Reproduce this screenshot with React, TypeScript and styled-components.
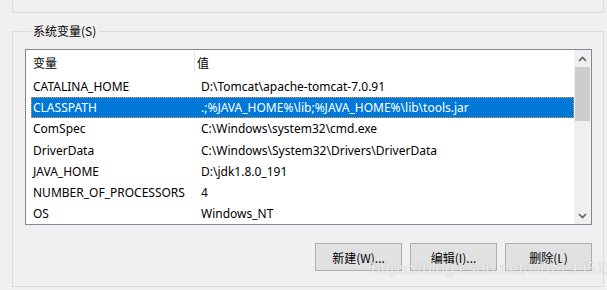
import styled, { createGlobalStyle } from 'styled-components'

const GlobalStyle = createGlobalStyle`
  html, body {
    margin: 0;
    padding: 0;
    background: #f0f0f0;
    font-family: "Noto Sans", "Noto Sans CJK SC", sans-serif;
    font-size: 12px;
    color: #000;
  }
`

const Page = styled.div`
  position: relative;
  width: 607px;
  height: 290px;
  padding-left: 12px;
  box-sizing: border-box;
  overflow: hidden;
`

const UpperBox = styled.div`
  width: 592px;
  height: 13px;
  box-sizing: border-box;
  border: 1px solid #dcdcdc;
  border-top: none;
`

const Group = styled.fieldset`
  width: 592px;
  box-sizing: border-box;
  margin: 10px 0 0;
  padding: 10px 12px 15px 12px;
  border: 1px solid #dcdcdc;
  min-width: 0;
`

const Legend = styled.legend`
  margin-left: 6px;
  padding: 0 2px;
  font-family: "Noto Sans CJK SC", sans-serif;
  font-size: 12px;
  line-height: 16px;
`

const ListBox = styled.div`
  display: flex;
  width: 567px;
  height: 176px;
  box-sizing: border-box;
  border: 1px solid #828790;
  background: #fff;
`

const ListBody = styled.div`
  flex: 1;
  display: flex;
  flex-direction: column;
  padding-left: 5px;
`

const Header = styled.div`
  display: flex;
  height: 26px;
  align-items: flex-start;
  padding-top: 1px;
  box-sizing: border-box;
`

const HeaderCell = styled.div<{ $w?: number; $sep?: boolean }>`
  width: ${p => (p.$w ? `${p.$w}px` : 'auto')};
  flex: ${p => (p.$w ? 'none' : '1')};
  height: 22px;
  box-sizing: border-box;
  padding-left: 2px;
  display: flex;
  align-items: center;
  font-family: "Noto Sans CJK SC", sans-serif;
  border-right: ${p => (p.$sep ? '1px solid #e5e5e5' : 'none')};
`

const Row = styled.div<{ $sel?: boolean }>`
  display: flex;
  height: 21.2px;
  align-items: center;
  box-sizing: border-box;
  background: ${p => (p.$sel ? '#0078d7' : 'transparent')};
  color: ${p => (p.$sel ? '#fff' : '#000')};
  border: 1px ${p => (p.$sel ? 'dotted #f59a3c' : 'solid transparent')};
`

const Cell = styled.div<{ $w?: number }>`
  width: ${p => (p.$w ? `${p.$w}px` : 'auto')};
  flex: ${p => (p.$w ? 'none' : '1')};
  padding-left: 1px;
  white-space: nowrap;
  overflow: hidden;
`

const ScrollBar = styled.div`
  width: 17px;
  display: flex;
  flex-direction: column;
  align-items: center;
  background: #f0f0f0;
`

const Arrow = styled.div`
  height: 17px;
  width: 17px;
  display: flex;
  align-items: center;
  justify-content: center;
`

const Thumb = styled.div`
  width: 15px;
  height: 54px;
  background: #cdcdcd;
`

const Track = styled.div`
  flex: 1;
`

const Buttons = styled.div`
  display: flex;
  justify-content: flex-end;
  gap: 8px;
  margin-top: 18px;
  width: 567px;
`

const Button = styled.button`
  width: 87px;
  height: 28px;
  background: #e1e1e1;
  border: 1px solid #adadad;
  font-family: "Noto Sans CJK SC", sans-serif;
  font-size: 12px;
  color: #000;
  padding: 0;
`

const Watermark = styled.div`
  position: absolute;
  left: 371px;
  top: 259px;
  font-family: "Liberation Sans", sans-serif;
  font-size: 17px;
  white-space: nowrap;
  color: rgba(255, 255, 255, 0.75);
  text-shadow: 0 0 1px rgba(120, 120, 120, 0.5);
  pointer-events: none;
`

const vars: [string, string][] = [
  ['CATALINA_HOME', 'D:\\Tomcat\\apache-tomcat-7.0.91'],
  ['CLASSPATH', '.;%JAVA_HOME%\\lib;%JAVA_HOME%\\lib\\tools.jar'],
  ['ComSpec', 'C:\\Windows\\system32\\cmd.exe'],
  ['DriverData', 'C:\\Windows\\System32\\Drivers\\DriverData'],
  ['JAVA_HOME', 'D:\\jdk1.8.0_191'],
  ['NUMBER_OF_PROCESSORS', '4'],
  ['OS', 'Windows_NT'],
]

const Chevron = ({ up }: { up?: boolean }) => (
  <svg width="9" height="6" viewBox="0 0 9 6">
    <path
      d={up ? 'M1 5 L4.5 1.5 L8 5' : 'M1 1 L4.5 4.5 L8 1'}
      fill="none"
      stroke="#606060"
      strokeWidth="1.6"
    />
  </svg>
)

export default function App() {
  return (
    <Page>
      <GlobalStyle />
      <UpperBox />
      <Group>
        <Legend>系统变量(S)</Legend>
        <ListBox>
          <ListBody>
            <Header>
              <HeaderCell $w={164} $sep>变量</HeaderCell>
              <HeaderCell>值</HeaderCell>
            </Header>
            {vars.map(([k, v], i) => (
              <Row key={k} $sel={i === 1}>
                <Cell $w={167}>{k}</Cell>
                <Cell>{v}</Cell>
              </Row>
            ))}
          </ListBody>
          <ScrollBar>
            <Arrow><Chevron up /></Arrow>
            <Thumb />
            <Track />
            <Arrow><Chevron /></Arrow>
          </ScrollBar>
        </ListBox>
        <Buttons>
          <Button>新建(W)...</Button>
          <Button>编辑(I)...</Button>
          <Button>删除(L)</Button>
        </Buttons>
      </Group>
      <Watermark>https://blog.csdn.net/whz199511</Watermark>
    </Page>
  )
}
